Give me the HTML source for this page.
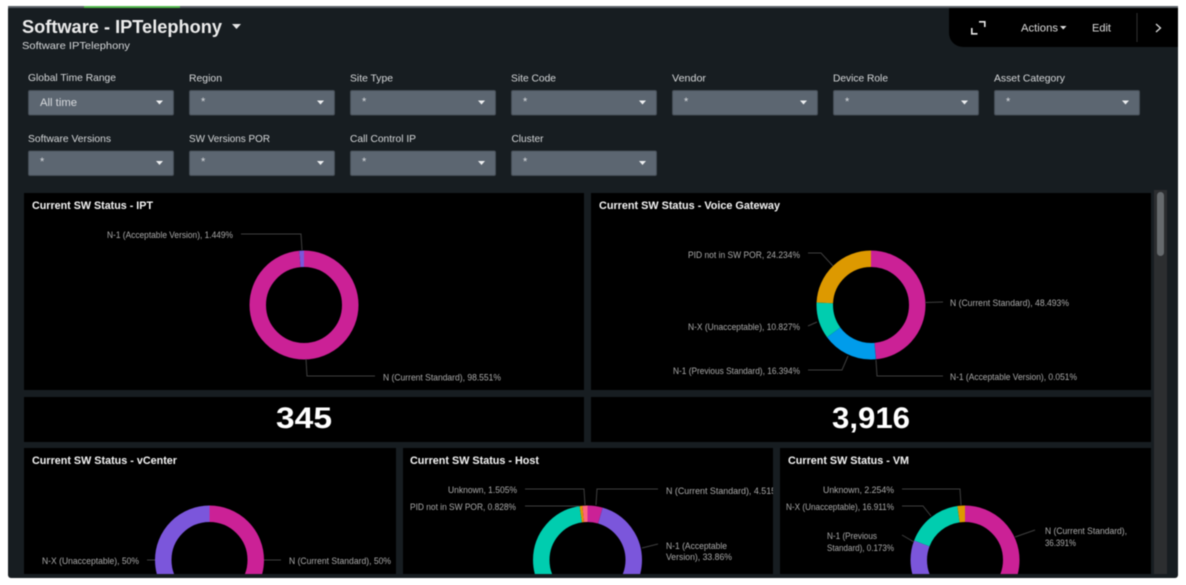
<!DOCTYPE html>
<html>
<head>
<meta charset="utf-8">
<style>
html,body{margin:0;padding:0;background:#fff;width:1186px;height:585px;overflow:hidden}
svg{display:block;filter:blur(.4px)}
text{font-family:"Liberation Sans",sans-serif}
.l{font-size:10.5px;fill:#d6d8da}
.t{font-size:11px;font-weight:bold;fill:#f4f4f4}
.c{font-size:9px;fill:#aaaaaa}
.ln{fill:none;stroke:#3f3f3f;stroke-width:1}
.in{fill:#5c6671;stroke:#454d55;stroke-width:1}
.st{fill:#d8dbde;font-size:11px}
.d{fill:none;stroke-width:16.5}
</style>
</head>
<body>
<svg width="1186" height="585" viewBox="0 0 1186 585" xmlns="http://www.w3.org/2000/svg">
<defs>
<clipPath id="c1"><rect x="24" y="448" width="372" height="126"/></clipPath>
<clipPath id="c2"><rect x="403" y="448" width="370" height="126"/></clipPath>
<clipPath id="c3"><rect x="780" y="448" width="371" height="126"/></clipPath>
</defs>

<rect x="8" y="6" width="1170" height="572" rx="3" fill="#171d21"/>
<rect x="8" y="6" width="1170" height="2" fill="#5a6066"/>
<rect x="84" y="6" width="96" height="2" fill="#53b84e"/>

<!-- Header -->
<text x="22" y="33" font-size="18.5" font-weight="bold" fill="#ececec" textLength="200" lengthAdjust="spacingAndGlyphs">Software - IPTelephony</text>
<path d="M232 24h9l-4.500 5z" fill="#e6e6e6"/>
<text x="22" y="49" font-size="10.500" fill="#d6d8da" textLength="108" lengthAdjust="spacingAndGlyphs">Software IPTelephony</text>

<!-- Toolbar -->
<path d="M949 8H1178V47H963A14 14 0 0 1 949 33Z" fill="#000"/>
<path d="M971.800 28V33.800H977.500M979 21.800H984.800V27" fill="none" stroke="#e8e8e8" stroke-width="1.600"/>
<text x="1021" y="31.500" font-size="11" fill="#dcdcdc" textLength="37" lengthAdjust="spacingAndGlyphs">Actions</text>
<path d="M1060 26h6.500l-3.250 3.500z" fill="#dcdcdc"/>
<text x="1092" y="31.500" font-size="11" fill="#dcdcdc" textLength="19" lengthAdjust="spacingAndGlyphs">Edit</text>
<rect x="1136.500" y="13" width="1" height="29" fill="#303030"/>
<path d="M1156 24l4.500 4-4.500 4" fill="none" stroke="#dcdcdc" stroke-width="1.300"/>

<!-- Filter labels -->
<text class="l" x="28" y="81" textLength="88" lengthAdjust="spacingAndGlyphs">Global Time Range</text>
<text class="l" x="189" y="81.500" textLength="33" lengthAdjust="spacingAndGlyphs">Region</text>
<text class="l" x="350" y="81.500" textLength="43" lengthAdjust="spacingAndGlyphs">Site Type</text>
<text class="l" x="511" y="81.500" textLength="45" lengthAdjust="spacingAndGlyphs">Site Code</text>
<text class="l" x="672" y="81.500" textLength="34" lengthAdjust="spacingAndGlyphs">Vendor</text>
<text class="l" x="833" y="81.500" textLength="55" lengthAdjust="spacingAndGlyphs">Device Role</text>
<text class="l" x="994" y="81.500" textLength="71" lengthAdjust="spacingAndGlyphs">Asset Category</text>
<text class="l" x="28" y="142" textLength="83" lengthAdjust="spacingAndGlyphs">Software Versions</text>
<text class="l" x="189" y="142" textLength="81" lengthAdjust="spacingAndGlyphs">SW Versions POR</text>
<text class="l" x="350" y="142" textLength="66" lengthAdjust="spacingAndGlyphs">Call Control IP</text>
<text class="l" x="511.500" y="142" textLength="32" lengthAdjust="spacingAndGlyphs">Cluster</text>

<!-- Inputs row 1 -->
<rect class="in" x="28.500" y="90.500" width="145" height="24.500" rx="1.500"/>
<rect class="in" x="189.500" y="90.500" width="145" height="24.500" rx="1.500"/>
<rect class="in" x="350.500" y="90.500" width="145" height="24.500" rx="1.500"/>
<rect class="in" x="511.500" y="90.500" width="145" height="24.500" rx="1.500"/>
<rect class="in" x="672.500" y="90.500" width="145" height="24.500" rx="1.500"/>
<rect class="in" x="833.500" y="90.500" width="145" height="24.500" rx="1.500"/>
<rect class="in" x="994.500" y="90.500" width="145" height="24.500" rx="1.500"/>
<!-- Inputs row 2 -->
<rect class="in" x="28.500" y="151" width="145" height="24.500" rx="1.500"/>
<rect class="in" x="189.500" y="151" width="145" height="24.500" rx="1.500"/>
<rect class="in" x="350.500" y="151" width="145" height="24.500" rx="1.500"/>
<rect class="in" x="511.500" y="151" width="145" height="24.500" rx="1.500"/>

<text class="st" x="40" y="106" textLength="37" lengthAdjust="spacingAndGlyphs">All time</text>
<text class="st" x="201" y="105">*</text>
<text class="st" x="362" y="105">*</text>
<text class="st" x="523" y="105">*</text>
<text class="st" x="684" y="105">*</text>
<text class="st" x="845" y="105">*</text>
<text class="st" x="1006" y="105">*</text>
<text class="st" x="40" y="165">*</text>
<text class="st" x="201" y="165">*</text>
<text class="st" x="362" y="165">*</text>
<text class="st" x="523" y="165">*</text>

<g fill="#eceef0">
<path d="M156 100.500h7l-3.500 4z"/>
<path d="M317 100.500h7l-3.500 4z"/>
<path d="M478 100.500h7l-3.500 4z"/>
<path d="M639 100.500h7l-3.500 4z"/>
<path d="M800 100.500h7l-3.500 4z"/>
<path d="M961 100.500h7l-3.500 4z"/>
<path d="M1122 100.500h7l-3.500 4z"/>
<path d="M156 161h7l-3.500 4z"/>
<path d="M317 161h7l-3.500 4z"/>
<path d="M478 161h7l-3.500 4z"/>
<path d="M639 161h7l-3.500 4z"/>
</g>

<!-- Panels -->
<g fill="#000">
<rect x="24" y="193" width="560" height="197"/>
<rect x="591" y="193" width="560" height="197"/>
<rect x="24" y="397" width="560" height="45"/>
<rect x="591" y="397" width="560" height="45"/>
<rect x="24" y="448" width="372" height="126"/>
<rect x="403" y="448" width="370" height="126"/>
<rect x="780" y="448" width="371" height="126"/>
</g>

<!-- Scrollbar -->
<rect x="1154" y="190" width="13" height="384" fill="#2c2e30"/>
<rect x="1157" y="192" width="7" height="64" rx="3.500" fill="#666a6d"/>

<!-- Titles -->
<text class="t" x="32" y="209" textLength="121" lengthAdjust="spacingAndGlyphs">Current SW Status - IPT</text>
<text class="t" x="599" y="209" textLength="181" lengthAdjust="spacingAndGlyphs">Current SW Status - Voice Gateway</text>
<text class="t" x="32" y="464" textLength="145" lengthAdjust="spacingAndGlyphs">Current SW Status - vCenter</text>
<text class="t" x="410" y="464" textLength="129" lengthAdjust="spacingAndGlyphs">Current SW Status - Host</text>
<text class="t" x="788" y="464" textLength="121" lengthAdjust="spacingAndGlyphs">Current SW Status - VM</text>

<!-- Stats -->
<text x="304" y="428" font-size="30" font-weight="bold" fill="#fff" text-anchor="middle" textLength="56" lengthAdjust="spacingAndGlyphs">345</text>
<text x="871" y="428" font-size="30" font-weight="bold" fill="#fff" text-anchor="middle" textLength="78" lengthAdjust="spacingAndGlyphs">3,916</text>

<!-- IPT donut -->
<g transform="rotate(-90 304 305)">
<circle class="d" cx="304" cy="305" r="46.250" pathLength="100" stroke="#CB2196" stroke-dasharray="98.551 100"/>
<circle class="d" cx="304" cy="305" r="46.250" pathLength="100" stroke="#7B56DB" stroke-dasharray="1.449 100" stroke-dashoffset="-98.551"/>
</g>
<path class="ln" d="M241 234H301L302 250"/>
<path class="ln" d="M306 359L307 376H375"/>
<text class="c" x="107" y="238" textLength="126" lengthAdjust="spacingAndGlyphs">N-1 (Acceptable Version), 1.449%</text>
<text class="c" x="383" y="380.500" textLength="118" lengthAdjust="spacingAndGlyphs">N (Current Standard), 98.551%</text>

<!-- Voice Gateway donut -->
<g transform="rotate(-90 871 305)">
<circle class="d" cx="871" cy="305" r="46.250" pathLength="100" stroke="#CB2196" stroke-dasharray="48.493 100"/>
<circle class="d" cx="871" cy="305" r="46.250" pathLength="100" stroke="#7B56DB" stroke-dasharray="0.051 100" stroke-dashoffset="-48.493"/>
<circle class="d" cx="871" cy="305" r="46.250" pathLength="100" stroke="#009CEB" stroke-dasharray="16.394 100" stroke-dashoffset="-48.544"/>
<circle class="d" cx="871" cy="305" r="46.250" pathLength="100" stroke="#00CDAF" stroke-dasharray="10.827 100" stroke-dashoffset="-64.938"/>
<circle class="d" cx="871" cy="305" r="46.250" pathLength="100" stroke="#DD9900" stroke-dasharray="24.235 100" stroke-dashoffset="-75.765"/>
</g>
<path class="ln" d="M808 253H821L833 266"/>
<path class="ln" d="M925 302.500L943 302"/>
<path class="ln" d="M808 326L817 322"/>
<path class="ln" d="M808 370H842L848 356"/>
<path class="ln" d="M876 360L877 376H943"/>
<text class="c" x="688" y="258" textLength="112" lengthAdjust="spacingAndGlyphs">PID not in SW POR, 24.234%</text>
<text class="c" x="950" y="306" textLength="119" lengthAdjust="spacingAndGlyphs">N (Current Standard), 48.493%</text>
<text class="c" x="688" y="330" textLength="112" lengthAdjust="spacingAndGlyphs">N-X (Unacceptable), 10.827%</text>
<text class="c" x="673" y="374" textLength="127" lengthAdjust="spacingAndGlyphs">N-1 (Previous Standard), 16.394%</text>
<text class="c" x="950" y="380" textLength="127" lengthAdjust="spacingAndGlyphs">N-1 (Acceptable Version), 0.051%</text>

<!-- vCenter -->
<g clip-path="url(#c1)">
<g transform="rotate(-90 209.500 560)">
<circle class="d" cx="209.500" cy="560" r="46.250" pathLength="100" stroke="#CB2196" stroke-dasharray="50 100"/>
<circle class="d" cx="209.500" cy="560" r="46.250" pathLength="100" stroke="#7B56DB" stroke-dasharray="50 100" stroke-dashoffset="-50"/>
</g>
<path class="ln" d="M147 560H155"/>
<path class="ln" d="M264 560H281"/>
<text class="c" x="42" y="564" textLength="97" lengthAdjust="spacingAndGlyphs">N-X (Unacceptable), 50%</text>
<text class="c" x="289" y="564" textLength="102" lengthAdjust="spacingAndGlyphs">N (Current Standard), 50%</text>
</g>

<!-- Host -->
<g clip-path="url(#c2)">
<g transform="rotate(-90 587.500 560)">
<circle class="d" cx="587.500" cy="560" r="46.250" pathLength="100" stroke="#CB2196" stroke-dasharray="4.515 100"/>
<circle class="d" cx="587.500" cy="560" r="46.250" pathLength="100" stroke="#7B56DB" stroke-dasharray="33.860 100" stroke-dashoffset="-4.515"/>
<circle class="d" cx="587.500" cy="560" r="46.250" pathLength="100" stroke="#00CDAF" stroke-dasharray="59.292 100" stroke-dashoffset="-38.375"/>
<circle class="d" cx="587.500" cy="560" r="46.250" pathLength="100" stroke="#DD9900" stroke-dasharray="0.828 100" stroke-dashoffset="-97.667"/>
<circle class="d" cx="587.500" cy="560" r="46.250" pathLength="100" stroke="#FF677B" stroke-dasharray="1.505 100" stroke-dashoffset="-98.495"/>
</g>
<path class="ln" d="M525 489H584L585 505"/>
<path class="ln" d="M525 506H580"/>
<path class="ln" d="M596 505L597 489H658"/>
<path class="ln" d="M642 548L658 544"/>
<text class="c" x="448" y="493" textLength="69" lengthAdjust="spacingAndGlyphs">Unknown, 1.505%</text>
<text class="c" x="410" y="510" textLength="106" lengthAdjust="spacingAndGlyphs">PID not in SW POR, 0.828%</text>
<text class="c" x="666" y="494" textLength="118" lengthAdjust="spacingAndGlyphs">N (Current Standard), 4.515%</text>
<text class="c" x="666" y="549" textLength="61" lengthAdjust="spacingAndGlyphs">N-1 (Acceptable</text>
<text class="c" x="666" y="560" textLength="66" lengthAdjust="spacingAndGlyphs">Version), 33.86%</text>
</g>

<!-- VM -->
<g clip-path="url(#c3)">
<g transform="rotate(-90 965 560)">
<circle class="d" cx="965" cy="560" r="46.250" pathLength="100" stroke="#CB2196" stroke-dasharray="36.391 100"/>
<circle class="d" cx="965" cy="560" r="46.250" pathLength="100" stroke="#7B56DB" stroke-dasharray="44.444 100" stroke-dashoffset="-36.391"/>
<circle class="d" cx="965" cy="560" r="46.250" pathLength="100" stroke="#00CDAF" stroke-dasharray="16.911 100" stroke-dashoffset="-80.835"/>
<circle class="d" cx="965" cy="560" r="46.250" pathLength="100" stroke="#DD9900" stroke-dasharray="2.254 100" stroke-dashoffset="-97.746"/>
</g>
<path class="ln" d="M902 489H960L961 505"/>
<path class="ln" d="M902 506H923L931 516"/>
<path class="ln" d="M902 535L914 542"/>
<path class="ln" d="M1015 537L1035 530"/>
<text class="c" x="823" y="493" textLength="71" lengthAdjust="spacingAndGlyphs">Unknown, 2.254%</text>
<text class="c" x="786" y="510" textLength="108" lengthAdjust="spacingAndGlyphs">N-X (Unacceptable), 16.911%</text>
<text class="c" x="827" y="539" textLength="50" lengthAdjust="spacingAndGlyphs">N-1 (Previous</text>
<text class="c" x="827" y="551" textLength="67" lengthAdjust="spacingAndGlyphs">Standard), 0.173%</text>
<text class="c" x="1045" y="534" textLength="82" lengthAdjust="spacingAndGlyphs">N (Current Standard),</text>
<text class="c" x="1045" y="546" textLength="31" lengthAdjust="spacingAndGlyphs">36.391%</text>
</g>
</svg>
</body>
</html>
